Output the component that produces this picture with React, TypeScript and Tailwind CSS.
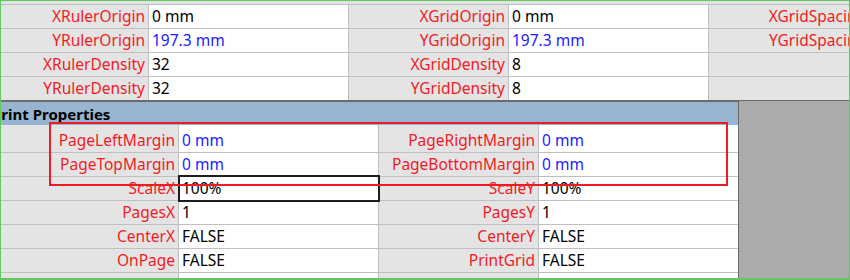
import React from "react";

type TopRow = {
  l1: string;
  v1: string;
  b1?: boolean;
  l2: string;
  v2: string;
  b2?: boolean;
  l3: string;
};

const topRows: TopRow[] = [
  { l1: "XRulerOrigin", v1: "0 mm", l2: "XGridOrigin", v2: "0 mm", l3: "XGridSpacing" },
  { l1: "YRulerOrigin", v1: "197.3 mm", b1: true, l2: "YGridOrigin", v2: "197.3 mm", b2: true, l3: "YGridSpacing" },
  { l1: "XRulerDensity", v1: "32", l2: "XGridDensity", v2: "8", l3: "" },
  { l1: "YRulerDensity", v1: "32", l2: "YGridDensity", v2: "8", l3: "" },
];

type PRow = { l1: string; v1: string; b1?: boolean; l2: string; v2: string; b2?: boolean };

const printRows: PRow[] = [
  { l1: "PageLeftMargin", v1: "0 mm", b1: true, l2: "PageRightMargin", v2: "0 mm", b2: true },
  { l1: "PageTopMargin", v1: "0 mm", b1: true, l2: "PageBottomMargin", v2: "0 mm", b2: true },
  { l1: "ScaleX", v1: "100%", l2: "ScaleY", v2: "100%" },
  { l1: "PagesX", v1: "1", l2: "PagesY", v2: "1" },
  { l1: "CenterX", v1: "FALSE", l2: "CenterY", v2: "FALSE" },
  { l1: "OnPage", v1: "FALSE", l2: "PrintGrid", v2: "FALSE" },
  { l1: "PrintPageNumbers", v1: "", l2: "Header", v2: "" },
];

export default function App() {
  return (
    <div className="relative w-[850px] h-[280px] overflow-hidden border-l border-r border-t border-b-2 border-[#5fc95f] bg-[#ababab] font-['Noto_Sans','Liberation_Sans',sans-serif] text-[15.5px] leading-[23px]">
      {/* top band (previous row remnant) */}
      <div className="h-[4px] bg-[#e2e2e2] border-b border-[#bfbfbf]" />

      {/* top property grid */}
      <div className="w-[848px] overflow-hidden">
        {topRows.map((r, i) => (
          <div
            key={i}
            className={
              "flex h-[24px] border-b whitespace-nowrap " +
              (i === topRows.length - 1 ? "border-[#6b6b6b]" : "border-[#bfbfbf]")
            }
          >
            <div className="ml-[-12px] w-[160px] shrink-0 bg-[#e4e4e4] border-r border-[#bfbfbf] text-right pr-[3px] text-[#f01c24] overflow-hidden">
              {r.l1}
            </div>
            <div
              className={
                "w-[200px] shrink-0 bg-white border-r border-[#bfbfbf] pl-[3px] overflow-hidden " +
                (r.b1 ? "text-[#1a1aff]" : "text-black")
              }
            >
              {r.v1}
            </div>
            <div className="w-[160px] shrink-0 bg-[#e4e4e4] border-r border-[#bfbfbf] text-right pr-[3px] text-[#f01c24] overflow-hidden">
              {r.l2}
            </div>
            <div
              className={
                "w-[200px] shrink-0 bg-white border-r border-[#bfbfbf] pl-[3px] overflow-hidden " +
                (r.b2 ? "text-[#1a1aff]" : "text-black")
              }
            >
              {r.v2}
            </div>
            <div className="w-[160px] shrink-0 bg-[#e4e4e4] text-right pr-[3px] text-[#f01c24]">
              {r.l3}
            </div>
          </div>
        ))}
      </div>

      {/* print properties panel */}
      <div className="w-[738px] border-t border-r border-[#6b6b6b] overflow-hidden">
        <div className="h-[23px] pt-[1px] bg-[#98b4d0] whitespace-nowrap font-bold text-black text-[15px] leading-[22px]">
          <span className="ml-[-9px]">Print Properties</span>
        </div>
        {printRows.map((r, i) => (
          <div
            key={i}
            className={
              "flex border-b border-[#bfbfbf] whitespace-nowrap " + (i === 0 ? "h-[28px]" : "h-[24px]")
            }
          >
            <div
              className={
                "w-[178px] shrink-0 bg-[#e4e4e4] border-r border-[#bfbfbf] text-right pr-[3px] text-[#f01c24] overflow-hidden " +
                (i === 0 ? "pt-[4px]" : "")
              }
            >
              {r.l1}
            </div>
            <div
              className={
                "w-[200px] shrink-0 bg-white border-r border-[#bfbfbf] pl-[3px] overflow-hidden " +
                (r.b1 ? "text-[#1a1aff] " : "text-black ") +
                (i === 0 ? "pt-[4px]" : "")
              }
            >
              {r.v1}
            </div>
            <div
              className={
                "w-[160px] shrink-0 bg-[#e4e4e4] border-r border-[#bfbfbf] text-right pr-[3px] text-[#f01c24] overflow-hidden " +
                (i === 0 ? "pt-[4px]" : "")
              }
            >
              {r.l2}
            </div>
            <div
              className={
                "w-[199px] shrink-0 bg-white pl-[3px] overflow-hidden " +
                (r.b2 ? "text-[#1a1aff] " : "text-black ") +
                (i === 0 ? "pt-[4px]" : "")
              }
            >
              {r.v2}
            </div>
          </div>
        ))}
      </div>

      {/* selected cell outline */}
      <div className="absolute left-[177px] top-[174px] w-[202px] h-[27px] border-2 border-[#1e1e1e] pointer-events-none" />

      {/* red annotation rectangle */}
      <div className="absolute left-[48px] top-[121px] w-[679px] h-[64px] border-2 border-[#ec1c24] pointer-events-none" />
    </div>
  );
}
